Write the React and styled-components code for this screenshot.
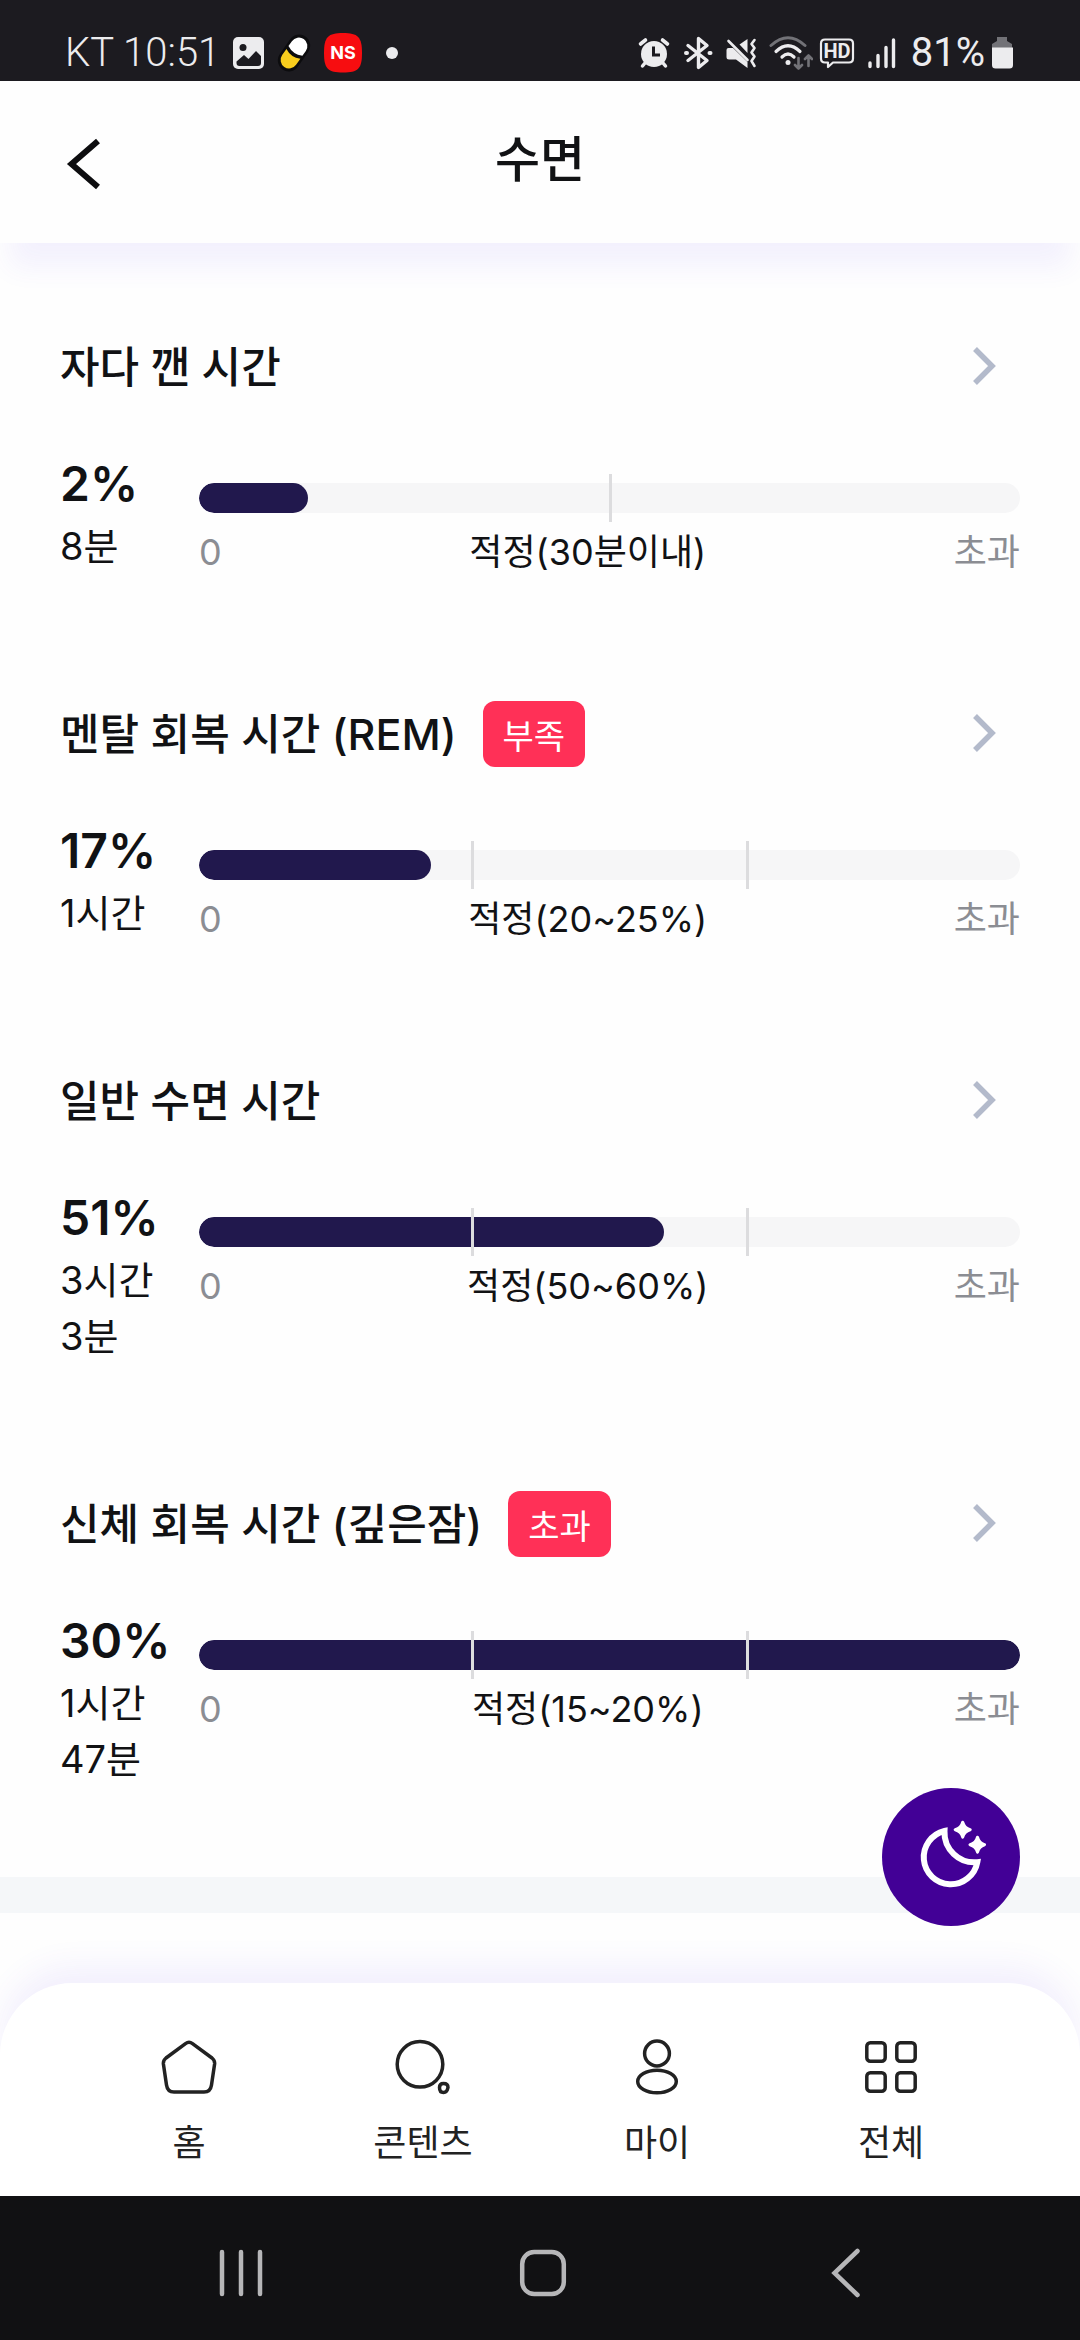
import React from "react";
import styled, { createGlobalStyle } from "styled-components";

const GlobalStyle = createGlobalStyle`
  *, *::before, *::after { box-sizing: border-box; }
  body {
    margin: 0;
    background: #fefefe;
    color: #111214;
    font-family: Inter, "Noto Sans CJK KR", sans-serif;
  }
  button {
    margin: 0;
    padding: 0;
    border: 0;
    background: none;
    color: inherit;
    font: inherit;
    cursor: pointer;
  }
  h1, h2, p { margin: 0; }
  svg { display: block; flex: none; }
`;

const Screen = styled.div`
  display: flex;
  flex-direction: column;
  height: 100vh;
  overflow: hidden;
`;

const StatusBar = styled.div`
  display: flex;
  flex: none;
  align-items: center;
  justify-content: space-between;
  padding: 25px 67px 0 65px;
  height: 81px;
  background: #1c1b20;
  color: #ececee;
  font-family: Roboto, sans-serif;
  font-size: 40px;
  line-height: 56px;
  position: relative;
  z-index: 3;
`;

const StatusGroup = styled.div`
  display: flex;
  align-items: center;
  gap: ${(p) => p.$gap}px;
`;

const Carrier = styled.span`
  margin-right: 2px;
  font-weight: 300;
`;

const Header = styled.header`
  display: grid;
  grid-template-columns: 1fr auto 1fr;
  flex: none;
  align-items: center;
  height: 162px;
  padding: 0 60px 4px;
  background: #fefefe;
  box-shadow: 0 34px 26px -10px rgba(96, 64, 240, 0.07);
  position: relative;
  z-index: 2;
`;

const BackButton = styled.button`
  justify-self: start;
  padding: 8px 0 0 6px;
`;

const PageTitle = styled.h1`
  font-size: 49px;
  font-weight: 500;
  line-height: 68px;
`;

const Main = styled.main`
  flex: 1;
  min-height: 0;
  padding-top: 91px;
`;

const Metrics = styled.div`
  display: flex;
  flex-direction: column;
  gap: 127px;
  padding: 0 60px 90px;
`;

const Metric = styled.section`
  display: flex;
  flex-direction: column;
  gap: 50px;
`;

const MetricHead = styled.div`
  display: flex;
  align-items: center;
  height: 66px;
`;

const MetricTitle = styled.h2`
  font-size: 43px;
  font-weight: 500;
  line-height: 66px;
`;

const Badge = styled.span`
  margin-left: 26px;
  padding: 6px 20px 0;
  border-radius: 12px;
  background: #ff3057;
  color: #fff;
  font-size: 34px;
  line-height: 60px;
`;

const MoreButton = styled.button`
  margin-left: auto;
  padding: 12px 24px 12px 12px;
`;

const MetricBody = styled.div`
  display: grid;
  grid-template-columns: 110px 1fr;
  column-gap: 29px;
`;

const Percent = styled.p`
  font-size: 48px;
  font-weight: 600;
  line-height: 68px;
`;

const Duration = styled.p`
  font-size: 38px;
  line-height: 56px;
  word-break: keep-all;
`;

const Gauge = styled.div`
  padding-top: 24px;
`;

const TrackArea = styled.div`
  position: relative;
  padding: 9px 0;
`;

const Track = styled.div`
  height: 30px;
  border-radius: 15px;
  background: #f6f6f7;
  overflow: hidden;
`;

const Fill = styled.div`
  width: ${(p) => p.$value}%;
  height: 100%;
  border-radius: 15px;
  background: #21184d;
`;

const Tick = styled.span`
  position: absolute;
  top: 0;
  bottom: 0;
  left: ${(p) => p.$at}%;
  width: 3px;
  margin-left: -1px;
  background: #dcdcde;
`;

const Scale = styled.div`
  display: flex;
  justify-content: space-between;
  padding-top: 8px;
  color: #8b8d93;
  font-size: 36px;
  line-height: 44px;
`;

const Ideal = styled.span`
  color: #111214;
`;

const Divider = styled.div`
  height: 36px;
  background: #f5f7f9;
`;

const SleepButton = styled.button`
  position: fixed;
  right: 60px;
  bottom: 414px;
  z-index: 3;
  display: grid;
  place-items: center;
  width: 138px;
  height: 138px;
  border-radius: 50%;
  background: #420096;
`;

const TabBar = styled.nav`
  display: flex;
  flex: none;
  height: 213px;
  padding: 56px 72px 0;
  border-radius: 72px 72px 0 0;
  background: #fff;
  box-shadow: 0 -20px 32px -4px rgba(96, 64, 240, 0.08);
  position: relative;
  z-index: 2;
`;

const Tab = styled.a`
  display: flex;
  flex: 1;
  flex-direction: column;
  align-items: center;
  gap: 22px;
  color: #222;
  font-size: 36px;
  line-height: 52px;
  text-decoration: none;
`;

const SystemBar = styled.div`
  display: flex;
  flex: none;
  align-items: center;
  height: 144px;
  padding: 10px 83px 0 90px;
  background: #111113;
  position: relative;
  z-index: 3;
`;

const SystemButton = styled.button`
  display: flex;
  flex: 1;
  justify-content: center;
`;

const PictureIcon = () => (
  <svg width="32" height="32" viewBox="0 0 32 32" aria-hidden="true">
    <rect width="31" height="32" rx="5" fill="#ececee" />
    <circle cx="10" cy="10.500" r="3.500" fill="#1c1b20" />
    <path d="M3.500 24.500 L11 18 L15.500 22 L23 14 L28 19 V26 Q28 29 25 29 H6.500 Q3.500 29 3.500 26Z" fill="#1c1b20" />
  </svg>
);

const PillIcon = () => (
  <svg width="36" height="38" viewBox="0 0 36 38" aria-hidden="true">
    <g transform="rotate(35 18 19)">
      <rect x="7" y="-1" width="22" height="40" rx="11" fill="#0c0c0e" />
      <path d="M9.500 16.500 V10.500 A8.500 8.500 0 0 1 26.500 10.500 V16.500 Q18 21 9.500 16.500Z" fill="#fff" />
      <path d="M9.500 20 Q18 24.500 26.500 20 V27.500 A8.500 8.500 0 0 1 9.500 27.500Z" fill="#f8cd1d" />
    </g>
  </svg>
);

const NsIcon = () => (
  <svg width="40" height="40" viewBox="0 0 40 40" aria-hidden="true">
    <path d="M20 0 C35 0 39 4 39 20 C39 36 35 39.500 20 39.500 C5 39.500 1 36 1 20 C1 4 5 0 20 0Z" fill="#f70d10" />
    <text x="20" y="26" textAnchor="middle" fontFamily="Inter, sans-serif" fontSize="18" fontWeight="700" fill="#fff">NS</text>
  </svg>
);

const DotIcon = () => (
  <svg width="12" height="12" viewBox="0 0 12 12" aria-hidden="true">
    <circle cx="6" cy="6" r="6" fill="#ececee" />
  </svg>
);

const AlarmIcon = () => (
  <svg width="38" height="34" viewBox="0 0 38 34" aria-hidden="true">
    <circle cx="19" cy="18" r="13" fill="#ececee" />
    <path d="M5.500 8 L10.500 4 M32.500 8 L27.500 4" stroke="#ececee" strokeWidth="3.600" strokeLinecap="round" />
    <path d="M10 27 L7.500 30 M28 27 L30.500 30" stroke="#ececee" strokeWidth="3.500" strokeLinecap="round" />
    <path d="M18.500 10.500 V19 H25" stroke="#1c1b20" strokeWidth="3" fill="none" />
  </svg>
);

const BluetoothIcon = () => (
  <svg width="38" height="34" viewBox="0 0 38 34" fill="none" stroke="#ececee" strokeWidth="3.400" strokeLinecap="round" strokeLinejoin="round" aria-hidden="true">
    <path d="M9 9.500 L28 24.500 L19.500 31.500 V2.500 L28 9.500 L9 24.500" />
    <path d="M7 17 H8 M30.500 17 H31.500" strokeWidth="4" />
  </svg>
);

const MuteIcon = () => (
  <svg width="38" height="34" viewBox="0 0 38 34" aria-hidden="true">
    <path d="M3.500 14 Q3.500 12 5.500 12 H10 L24.500 26 V32 L13 23.500 H6 Q3.500 23.500 3.500 21Z" fill="#ececee" />
    <path d="M16.500 8.500 L24.500 3 V17Z" fill="#ececee" />
    <path d="M5.500 5 L24.500 24" stroke="#ececee" strokeWidth="2.600" strokeLinecap="round" />
    <path d="M31.500 4 L28.500 8 L31.500 12 L28.500 16.500 L31.500 20.500 L28.500 25 L31.500 30" stroke="#ececee" strokeWidth="2.600" fill="none" strokeLinecap="round" strokeLinejoin="round" />
  </svg>
);

const WifiIcon = () => (
  <svg width="46" height="36" viewBox="0 0 46 36" fill="none" strokeLinecap="round" aria-hidden="true">
    <path d="M4 10.500 Q21 -5 38 10.500" stroke="#727277" strokeWidth="3" />
    <path d="M9 16.500 Q21 5 33 16.500" stroke="#ececee" strokeWidth="3.200" />
    <path d="M15 22 Q21 16 27 22" stroke="#ececee" strokeWidth="3.200" />
    <circle cx="21" cy="27.500" r="2.500" fill="#ececee" />
    <path d="M31.500 23 V33.500 M28 30 L31.500 33.500 L35 30 M41.500 31 V20.500 M38 24 L41.500 20.500 L45 24" stroke="#727277" strokeWidth="2.600" strokeLinejoin="round" />
  </svg>
);

const HdIcon = () => (
  <svg width="36" height="34" viewBox="0 0 36 34" aria-hidden="true">
    <path d="M6 3.500 H30 Q34 3.500 34 7.500 V22.500 Q34 26.500 30 26.500 H14 L9 31 V26.500 H6 Q2 26.500 2 22.500 V7.500 Q2 3.500 6 3.500Z" fill="none" stroke="#ececee" strokeWidth="2.200" strokeLinejoin="round" />
    <text x="18" y="22" textAnchor="middle" fontFamily="Roboto, sans-serif" fontSize="20" fontWeight="700" fill="#ececee">HD</text>
  </svg>
);

const SignalIcon = () => (
  <svg width="44" height="34" viewBox="0 0 44 34" stroke="#ececee" strokeWidth="3.400" strokeLinecap="round" aria-hidden="true">
    <path d="M9 27 V30.500 M17 19.500 V30.500 M25 11.500 V30.500 M32.500 4 V30.500" />
  </svg>
);

const BatteryIcon = () => (
  <svg width="22" height="34" viewBox="0 0 22 34" aria-hidden="true">
    <path d="M6 1 H16 V5 L21 8 V12 H1 V8 L6 5Z" fill="#727277" />
    <path d="M1 11.500 H22 V29 Q22 32.500 18.500 32.500 H4.500 Q1 32.500 1 29Z" fill="#ececee" />
  </svg>
);

const BackIcon = () => (
  <svg width="36" height="52" viewBox="0 0 36 52" aria-hidden="true">
    <path d="M32 3 L5.500 26 L32 49" fill="none" stroke="#0d0d0f" strokeWidth="6" />
  </svg>
);

const MoreIcon = () => (
  <svg width="24" height="40" viewBox="0 0 24 40" aria-hidden="true">
    <path d="M3 2 L20 19 L3 36" fill="none" stroke="#b3bacb" strokeWidth="5.500" />
  </svg>
);

const MoonIcon = () => (
  <svg width="70" height="78" viewBox="0 0 70 78" fill="#fff" stroke="#fff" aria-hidden="true">
    <path d="M28.500 13 A27 27 0 1 0 61.300 44.200 A30 30 0 0 1 28.500 13Z" fill="none" strokeWidth="6" />
    <path d="M46.700 4.200 Q48.200 10.200 54.200 11.700 Q48.200 13.200 46.700 19.200 Q45.200 13.200 39.200 11.700 Q45.200 10.200 46.700 4.200Z M61.500 19.200 Q63 25.200 68.500 26.700 Q63 28.200 61.500 34.200 Q60 28.200 54 26.700 Q60 25.200 61.500 19.200Z" strokeWidth="3" strokeLinejoin="round" />
  </svg>
);

const TabIcon = ({ children }) => (
  <svg width="56" height="56" viewBox="0 0 56 56" fill="none" stroke="#222" strokeWidth="3.500" strokeLinejoin="round" aria-hidden="true">
    {children}
  </svg>
);

const tabs = [
  {
    label: "홈",
    icon: <path d="M24.500 4.600 Q28 2 31.500 4.600 L51 19 Q54 21.500 53.600 25 L50.500 46 Q49.500 53 43 53 H13 Q6.500 53 5.500 46 L2.400 25 Q2 21.500 5 19Z" />,
  },
  {
    label: "콘텐츠",
    icon: (
      <>
        <circle cx="25" cy="25.300" r="22.800" />
        <path d="M48.500 44.500 Q53 44.500 53 48.500 Q52 53.500 48.500 53.500 Q44.500 53.500 44.500 48.500 Q44.500 44.500 48.500 44.500Z" />
      </>
    ),
  },
  {
    label: "마이",
    icon: (
      <>
        <circle cx="28" cy="14.500" r="12.400" />
        <ellipse cx="28" cy="42.500" rx="19.300" ry="11.300" />
      </>
    ),
  },
  {
    label: "전체",
    icon: (
      <>
        <rect x="3.800" y="3.800" width="18.400" height="18.400" rx="3.500" />
        <rect x="33.800" y="3.800" width="18.400" height="18.400" rx="3.500" />
        <rect x="3.800" y="33.800" width="18.400" height="18.400" rx="3.500" />
        <rect x="33.800" y="33.800" width="18.400" height="18.400" rx="3.500" />
      </>
    ),
  },
];

const metrics = [
  { title: "자다 깬 시간", percent: 2, duration: "8분", fill: 13.3, ticks: [50], ideal: "적정(30분이내)" },
  { title: "멘탈 회복 시간 (REM)", badge: "부족", percent: 17, duration: "1시간", fill: 28.3, ticks: [33.2, 66.8], ideal: "적정(20~25%)" },
  { title: "일반 수면 시간", percent: 51, duration: "3시간 3분", fill: 56.6, ticks: [33.2, 66.8], ideal: "적정(50~60%)" },
  { title: "신체 회복 시간 (깊은잠)", badge: "초과", percent: 30, duration: "1시간 47분", fill: 100, ticks: [33.2, 66.8], ideal: "적정(15~20%)" },
];

function SleepMetric({ title, badge, percent, duration, fill, ticks, ideal }) {
  return (
    <Metric>
      <MetricHead>
        <MetricTitle>{title}</MetricTitle>
        {badge && <Badge>{badge}</Badge>}
        <MoreButton type="button" aria-label={title}>
          <MoreIcon />
        </MoreButton>
      </MetricHead>
      <MetricBody>
        <div>
          <Percent>{percent}%</Percent>
          <Duration>{duration}</Duration>
        </div>
        <Gauge>
          <TrackArea>
            <Track>
              <Fill $value={fill} />
            </Track>
            {ticks.map((at) => (
              <Tick key={at} $at={at} />
            ))}
          </TrackArea>
          <Scale>
            <span>0</span>
            <Ideal>{ideal}</Ideal>
            <span>초과</span>
          </Scale>
        </Gauge>
      </MetricBody>
    </Metric>
  );
}

export default function App() {
  return (
    <>
      <GlobalStyle />
      <Screen>
        <StatusBar>
          <StatusGroup $gap={11}>
            <Carrier>KT 10:51</Carrier>
            <PictureIcon />
            <PillIcon />
            <NsIcon />
            <StatusGroup $gap={12}>
              <span />
              <DotIcon />
            </StatusGroup>
          </StatusGroup>
          <StatusGroup $gap={6}>
            <AlarmIcon />
            <BluetoothIcon />
            <MuteIcon />
            <WifiIcon />
            <HdIcon />
            <SignalIcon />
            <span>81%</span>
            <BatteryIcon />
          </StatusGroup>
        </StatusBar>
        <Header>
          <BackButton type="button" aria-label="뒤로">
            <BackIcon />
          </BackButton>
          <PageTitle>수면</PageTitle>
        </Header>
        <Main>
          <Metrics>
            {metrics.map((metric) => (
              <SleepMetric key={metric.title} {...metric} />
            ))}
          </Metrics>
          <Divider />
        </Main>
        <SleepButton type="button" aria-label="수면">
          <MoonIcon />
        </SleepButton>
        <TabBar>
          {tabs.map(({ label, icon }) => (
            <Tab key={label} href="#">
              <TabIcon>{icon}</TabIcon>
              {label}
            </Tab>
          ))}
        </TabBar>
        <SystemBar>
          <SystemButton type="button" aria-label="최근 앱">
            <svg width="48" height="50" viewBox="0 0 48 50" stroke="#b6b6b8" strokeWidth="4.500" strokeLinecap="round" aria-hidden="true">
              <path d="M5 4 V46 M24 4 V46 M43 4 V46" />
            </svg>
          </SystemButton>
          <SystemButton type="button" aria-label="홈">
            <svg width="48" height="50" viewBox="0 0 48 50" fill="none" stroke="#b6b6b8" strokeWidth="4.500" aria-hidden="true">
              <rect x="3.200" y="4" width="41.600" height="42" rx="12" />
            </svg>
          </SystemButton>
          <SystemButton type="button" aria-label="뒤로">
            <svg width="48" height="50" viewBox="0 0 48 50" fill="none" stroke="#b6b6b8" strokeWidth="4.500" strokeLinecap="round" aria-hidden="true">
              <path d="M35.500 3 L12.500 25 L35.500 47" />
            </svg>
          </SystemButton>
        </SystemBar>
      </Screen>
    </>
  );
}
